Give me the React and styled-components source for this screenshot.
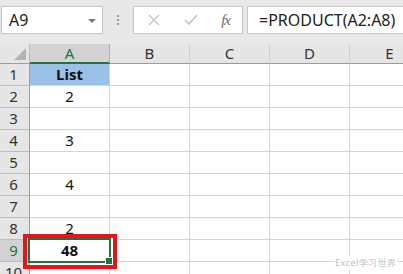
import React from 'react'
import styled, { createGlobalStyle } from 'styled-components'

const GlobalStyle = createGlobalStyle`
  html, body {
    margin: 0;
    padding: 0;
    background: #e8e8e8;
    overflow: hidden;
  }
  body {
    font-family: "Noto Sans", "Liberation Sans", sans-serif;
  }
`

const columns = ['A', 'B', 'C', 'D', 'E']
const values = { 2: '2', 4: '3', 6: '4', 8: '2' }

export default function App() {
  const rows = [1, 2, 3, 4, 5, 6, 7, 8, 9, 10]

  return (
    <Page>
      <GlobalStyle />
      <Toolbar>
        <NameBox>
          <span>A9</span>
          <Caret />
        </NameBox>
        <Grip>
          <i /><i /><i />
        </Grip>
        <Controls>
          <svg width="12" height="12" viewBox="0 0 12 12">
            <path d="M1 1 L11 11 M11 1 L1 11" stroke="#c4c4c4" strokeWidth="1.4" fill="none" />
          </svg>
          <svg width="14" height="12" viewBox="0 0 14 12">
            <path d="M1 6 L5 10 L13 1" stroke="#c4c4c4" strokeWidth="1.6" fill="none" />
          </svg>
          <Fx>fx</Fx>
        </Controls>
        <FormulaInput>=PRODUCT(A2:A8)</FormulaInput>
      </Toolbar>

      <Sheet>
        <Corner>
          <svg width="12" height="12" viewBox="0 0 12 12">
            <path d="M12 0 L12 12 L0 12 Z" fill="#b4b4b4" />
          </svg>
        </Corner>
        {columns.map(c => (
          <ColHead key={c} active={c === 'A'}>{c}</ColHead>
        ))}
        {rows.map(r => (
          <React.Fragment key={r}>
            <RowHead active={r === 9}>{r}</RowHead>
            {columns.map(c => {
              if (c !== 'A') return <Cell key={c} />
              if (r === 1) return <Cell key={c} header bold>List</Cell>
              if (r === 9) return <Cell key={c} bold>48</Cell>
              return <Cell key={c}>{values[r] || ''}</Cell>
            })}
          </React.Fragment>
        ))}
        <Selection><Handle /></Selection>
        <Highlight />
        <Watermark>Excel学习世界</Watermark>
      </Sheet>
    </Page>
  )
}

const Page = styled.div`
  width: 403px;
  height: 274px;
  overflow: hidden;
  background: #e8e8e8;
`

const Toolbar = styled.div`
  height: 44px;
  box-sizing: border-box;
  padding: 6px 0 0 1px;
  display: flex;
  align-items: flex-start;
`

const NameBox = styled.div`
  width: 102px;
  height: 28px;
  box-sizing: border-box;
  background: #fff;
  border: 1px solid #c6c6c6;
  display: flex;
  align-items: center;
  justify-content: space-between;
  padding: 0 6px 0 7px;
  font-size: 16px;
  color: #222;
`

const Caret = styled.span`
  width: 0;
  height: 0;
  border-left: 4px solid transparent;
  border-right: 4px solid transparent;
  border-top: 4px solid #7a7a7a;
  margin-top: 1px;
`

const Grip = styled.div`
  width: 30px;
  height: 28px;
  display: flex;
  flex-direction: column;
  align-items: center;
  justify-content: center;
  gap: 2px;

  i {
    width: 2px;
    height: 2px;
    background: #9a9a9a;
  }
`

const Controls = styled.div`
  width: 110px;
  height: 28px;
  box-sizing: border-box;
  background: #fff;
  border: 1px solid #c6c6c6;
  display: flex;
  align-items: center;
  justify-content: space-between;
  padding: 0 12px 0 14px;
`

const Fx = styled.span`
  font-family: "Liberation Serif", serif;
  font-style: italic;
  font-size: 15px;
  color: #6a6a6a;
  letter-spacing: -1px;
`

const FormulaInput = styled.div`
  flex: 1;
  margin-left: 4px;
  height: 28px;
  box-sizing: border-box;
  background: #fff;
  border: 1px solid #c6c6c6;
  border-right: none;
  display: flex;
  align-items: center;
  padding-left: 11px;
  font-size: 16px;
  color: #222;
  white-space: nowrap;
`

const Sheet = styled.div`
  position: relative;
  display: grid;
  grid-template-columns: 30px repeat(5, 80px);
  grid-template-rows: 20px repeat(10, 22px);
  background: #fff;
`

const Corner = styled.div`
  background: #e6e6e6;
  border-right: 1px solid #b8b8b8;
  border-bottom: 1px solid #9b9b9b;
  box-sizing: border-box;
  display: flex;
  align-items: flex-end;
  justify-content: flex-end;
  padding: 0 3px 3px 0;
`

const ColHead = styled.div`
  box-sizing: border-box;
  background: ${p => (p.active ? '#d3d3d3' : '#e6e6e6')};
  border-right: 1px solid ${p => (p.active ? '#b0b0b0' : '#d0d0d0')};
  border-bottom: ${p => (p.active ? '2px solid #217346' : '1px solid #9b9b9b')};
  color: ${p => (p.active ? '#217346' : '#333')};
  font-size: 15px;
  line-height: 18px;
  text-align: center;
`

const RowHead = styled.div`
  box-sizing: border-box;
  background: ${p => (p.active ? '#d3d3d3' : '#e6e6e6')};
  border-right: 1px solid #9b9b9b;
  border-bottom: 1px solid #bcbcbc;
  color: ${p => (p.active ? '#217346' : '#333')};
  font-size: 15px;
  line-height: 21px;
  text-align: center;
  padding-right: 2px;
`

const Cell = styled.div`
  box-sizing: border-box;
  background: ${p => (p.header ? '#9bc2e6' : '#fff')};
  border-right: 1px solid #d4d4d4;
  border-bottom: 1px solid #d4d4d4;
  font-size: 15px;
  line-height: 21px;
  font-weight: ${p => (p.bold ? 700 : 400)};
  color: #111;
  text-align: center;
`

const Selection = styled.div`
  position: absolute;
  left: 28px;
  top: 194px;
  width: 83px;
  height: 25px;
  box-sizing: border-box;
  border: 2px solid #217346;
`

const Handle = styled.div`
  position: absolute;
  right: -4px;
  bottom: -4px;
  width: 6px;
  height: 6px;
  background: #217346;
  border: 1px solid #fff;
`

const Highlight = styled.div`
  position: absolute;
  left: 23px;
  top: 190px;
  width: 94px;
  height: 35px;
  box-sizing: border-box;
  border: 4px solid #e8141c;
`

const Watermark = styled.div`
  position: absolute;
  left: 335px;
  top: 212px;
  font-size: 9px;
  color: #bdbdbd;
  background: #fff;
  letter-spacing: 0.5px;
`
